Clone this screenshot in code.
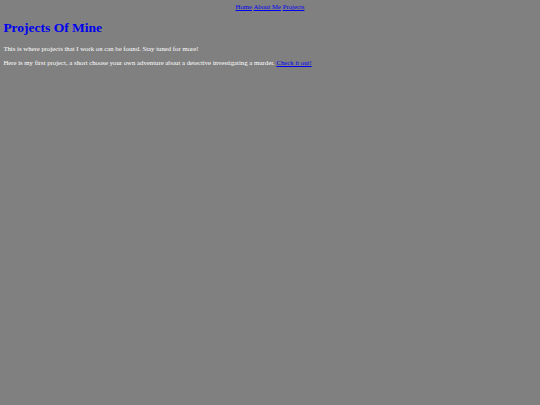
export default function App() {
  return (
    <div
      className="min-h-screen bg-[#808080] p-[3.375px] text-white"
      style={{ fontFamily: '"Liberation Serif", "Times New Roman", serif' }}
    >
      <div className="text-center text-[6.75px] leading-[1.15]">
        <a href="#" className="text-[#0000ee] underline">Home</a>{' '}
        <a href="#" className="text-[#0000ee] underline">About Me</a>{' '}
        <a href="#" className="text-[#0000ee] underline">Projects</a>
      </div>
      <h1 className="mt-[9.05px] mb-[9.05px] text-[13.5px] font-bold leading-[1.15] text-[#0000ee]">
        Projects Of Mine
      </h1>
      <p className="mb-[6.75px] text-[6.75px] leading-[1.15]">
        This is where projects that I work on can be found. Stay tuned for more!
      </p>
      <p className="text-[6.75px] leading-[1.15]">
        Here is my first project, a short choose your own adventure about a detective investigating a murder.{' '}
        <a href="#" className="text-[#0000ee] underline">Check it out!</a>
      </p>
    </div>
  );
}
